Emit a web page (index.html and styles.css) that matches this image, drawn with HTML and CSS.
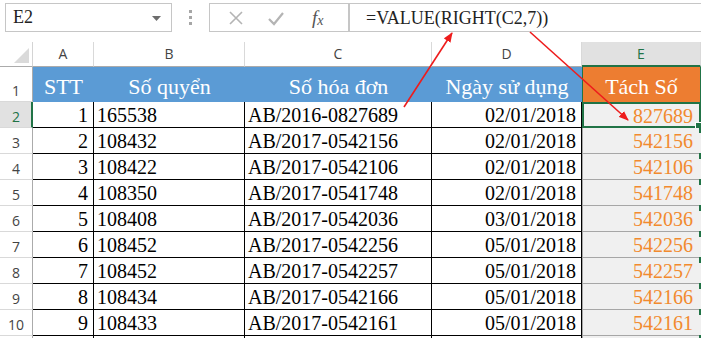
FILE: index.html
```html
<!DOCTYPE html>
<html>
<head>
<meta charset="utf-8">
<link rel="stylesheet" href="styles.css">
</head>
<body>
<div class="app">
  <div class="fbar">
    <div class="namebox"><span class="nb-text">E2</span><svg class="caret" width="9" height="5" viewBox="0 0 9 5"><path d="M0 0H9L4.5 5Z" fill="#6d6d6d"/></svg></div>
    <div class="dots"><i></i><i></i><i></i></div>
    <div class="btns">
      <svg width="16" height="16" viewBox="0 0 16 16"><path d="M2 2L14 14M14 2L2 14" stroke="#b4b4b4" stroke-width="1.6" fill="none"/></svg>
      <svg width="18" height="16" viewBox="0 0 18 16"><path d="M2 9L7 14L16 3" stroke="#b4b4b4" stroke-width="2.2" fill="none"/></svg>
      <span class="fx">f<sub>x</sub></span>
    </div>
    <div class="formula">=VALUE(RIGHT(C2,7))</div>
  </div>

  <div class="sheet">
    <div class="corner"><span class="tri"></span></div>
    <div class="ch">A</div><div class="ch">B</div><div class="ch">C</div><div class="ch">D</div><div class="ch ch-sel">E</div>

    <div class="rh rh-1">1</div>
    <div class="hd">STT</div><div class="hd">Số quyển</div><div class="hd">Số hóa đơn</div><div class="hd">Ngày sử dụng</div><div class="hd hd-e">Tách Số</div>

    <div class="rh rh-act">2</div>
    <div class="c r">1</div><div class="c">165538</div><div class="c">AB/2016-0827689</div><div class="c r">02/01/2018</div><div class="c r e e-act">827689</div>

    <div class="rh">3</div>
    <div class="c r">2</div><div class="c">108432</div><div class="c">AB/2017-0542156</div><div class="c r">02/01/2018</div><div class="c r e">542156</div>

    <div class="rh">4</div>
    <div class="c r">3</div><div class="c">108422</div><div class="c">AB/2017-0542106</div><div class="c r">02/01/2018</div><div class="c r e">542106</div>

    <div class="rh">5</div>
    <div class="c r">4</div><div class="c">108350</div><div class="c">AB/2017-0541748</div><div class="c r">02/01/2018</div><div class="c r e">541748</div>

    <div class="rh">6</div>
    <div class="c r">5</div><div class="c">108408</div><div class="c">AB/2017-0542036</div><div class="c r">03/01/2018</div><div class="c r e">542036</div>

    <div class="rh">7</div>
    <div class="c r">6</div><div class="c">108452</div><div class="c">AB/2017-0542256</div><div class="c r">05/01/2018</div><div class="c r e">542256</div>

    <div class="rh">8</div>
    <div class="c r">7</div><div class="c">108452</div><div class="c">AB/2017-0542257</div><div class="c r">05/01/2018</div><div class="c r e">542257</div>

    <div class="rh">9</div>
    <div class="c r">8</div><div class="c">108434</div><div class="c">AB/2017-0542166</div><div class="c r">05/01/2018</div><div class="c r e">542166</div>

    <div class="rh">10</div>
    <div class="c r">9</div><div class="c">108433</div><div class="c">AB/2017-0542161</div><div class="c r">05/01/2018</div><div class="c r e">542161</div>

    <div class="rh"></div>
    <div class="c"></div><div class="c"></div><div class="c"></div><div class="c"></div><div class="c e"></div>
  </div>

  <svg class="arrows" width="701" height="338" viewBox="0 0 701 338">
    <defs>
      <marker id="ah" markerWidth="10" markerHeight="8" refX="9" refY="4" orient="auto" markerUnits="userSpaceOnUse">
        <path d="M0 0L10 4L0 8Z" fill="#ee1c1c"/>
      </marker>
    </defs>
    <line x1="404" y1="107" x2="452" y2="33" stroke="#ee1c1c" stroke-width="1.6" marker-end="url(#ah)"/>
    <line x1="530" y1="32" x2="628" y2="120" stroke="#ee1c1c" stroke-width="1.6" marker-end="url(#ah)"/>
  </svg>
</div>
</body>
</html>
```

FILE: styles.css
```css
* { box-sizing: border-box; }
html, body { margin: 0; padding: 0; background: #fff; }
.app {
  position: relative;
  width: 701px;
  height: 338px;
  overflow: hidden;
  font-family: "Liberation Serif", "Times New Roman", serif;
}
.fbar {
  height: 42px;
  padding-top: 3px;
  display: flex;
  align-items: flex-start;
}
.namebox {
  margin-left: 5px;
  width: 167px;
  height: 29px;
  border: 1px solid #c6c6c6;
  display: flex;
  align-items: center;
  justify-content: space-between;
  padding: 0 10px 0 7px;
}
.nb-text { font-size: 18px; color: #222; }
.caret { margin-top: 1px; }
.dots {
  width: 37px;
  height: 29px;
  display: flex;
  flex-direction: column;
  align-items: center;
  justify-content: center;
  gap: 3px;
}
.dots i { display: block; width: 3px; height: 3px; background: #a6a6a6; }
.btns {
  width: 140px;
  height: 29px;
  border: 1px solid #c6c6c6;
  display: flex;
  align-items: center;
  padding-left: 18px;
  gap: 23px;
}
.fx {
  font-family: "Liberation Serif", serif;
  font-style: italic;
  font-size: 19px;
  color: #555;
  margin-left: 4px;
}
.fx sub { font-size: 14px; vertical-align: -1px; }
.formula {
  flex: 1;
  height: 29px;
  border-top: 1px solid #c6c6c6;
  border-bottom: 1px solid #c6c6c6;
  border-left: 1px solid #c6c6c6;
  padding-left: 16px;
  font-size: 18px;
  line-height: 28px;
  color: #222;
}
.sheet {
  display: grid;
  grid-template-columns: 33px 61px 151px 187px 150px 119px;
  grid-template-rows: 25px 35px repeat(9, 26px) 26px;
}
.corner {
  border-right: 1px solid #d4d4d4;
  border-bottom: 1px solid #ababab;
  position: relative;
}
.tri {
  position: absolute;
  right: 3px;
  bottom: 3px;
  width: 0; height: 0;
  border-left: 15px solid transparent;
  border-bottom: 15px solid #dadada;
}
.ch {
  font-family: "Open Sans", "Liberation Sans", sans-serif;
  font-size: 14px;
  color: #444;
  text-align: center;
  line-height: 24px;
  border-right: 1px solid #d9d9d9;
  border-bottom: 1px solid #ababab;
}
.ch-sel {
  background: #e1e1e1;
  color: #217346;
  border-bottom: 2px solid #217346;
}
.rh {
  font-family: "Open Sans", "Liberation Sans", sans-serif;
  font-size: 14px;
  color: #444;
  text-align: center;
  border-right: 1px solid #ababab;
  border-bottom: 1px solid #d9d9d9;
  display: flex;
  align-items: flex-end;
  justify-content: center;
  padding-bottom: 1px;
}
.rh-act {
  background: #e1e1e1;
  color: #217346;
  border-right: 2px solid #217346;
  padding-left: 1px;
}
.hd {
  background: #5b9bd5;
  color: #fff;
  font-size: 22px;
  text-align: center;
  line-height: 32px;
  padding-top: 4px;
  white-space: nowrap;
}
.hd-e {
  background: #ed7d31;
  border-left: 1px solid #217346;
  border-right: 1px solid #217346;
}
.c {
  font-size: 20px;
  color: #000;
  line-height: 25px;
  padding: 1px 4px 0 3px;
  border-right: 1px solid #000;
  border-bottom: 1px solid #000;
  white-space: nowrap;
}
.c.r { text-align: right; padding-right: 5px; }
.e {
  background: #f0f0f0;
  color: #f28a2e;
  border-right: 1px solid #f0f0f0;
  border-bottom: 1px solid #a6a6a6;
  border-left: 1px solid #a6a6a6;
  padding-right: 7px;
  position: relative;
}
.c.r.e { padding-right: 7px; }
.e::after {
  content: "";
  position: absolute;
  right: -1px;
  top: -1px;
  width: 2px;
  height: 6px;
  background: #217346;
}
.e-act {
  border: 2px solid #217346;
  line-height: 23px;
  padding-top: 1px;
  padding-right: 6px;
}
.c.r.e-act { padding-right: 6px; }
.e-act::after {
  right: -3px;
  top: auto;
  bottom: -3px;
  width: 5px;
  height: 5px;
  border: 1px solid #fff;
}
.arrows {
  position: absolute;
  left: 0;
  top: 0;
  pointer-events: none;
}
```
